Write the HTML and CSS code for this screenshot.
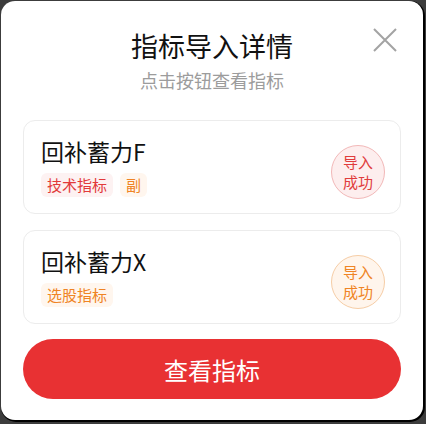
FILE: index.html
```html
<!DOCTYPE html>
<html lang="zh-CN">
<head>
    <meta charset="UTF-8">
    <meta name="viewport" content="width=device-width, initial-scale=1.0">
    <title>指标导入详情</title>
    <link rel="stylesheet" href="styles.css">
</head>
<body>

    <div class="dialog">
        <div class="dialog-head">
            <h2 class="dialog-title">指标导入详情</h2>
            <p class="dialog-sub">点击按钮查看指标</p>
            <button class="close-btn" aria-label="关闭">
                <svg width="24" height="24" viewBox="0 0 24 24">
                    <path d="M1 1 L23 23 M23 1 L1 23" stroke="#a3a3a3" stroke-width="2" fill="none"/>
                </svg>
            </button>
        </div>

        <div class="card-list">
            <div class="card">
                <div class="card-info">
                    <div class="card-name">回补蓄力F</div>
                    <div class="tags">
                        <span class="tag tag-red">技术指标</span>
                        <span class="tag tag-orange">副</span>
                    </div>
                </div>
                <div class="badge badge-red">导入<br>成功</div>
            </div>

            <div class="card">
                <div class="card-info">
                    <div class="card-name">回补蓄力X</div>
                    <div class="tags">
                        <span class="tag tag-orange">选股指标</span>
                    </div>
                </div>
                <div class="badge badge-orange">导入<br>成功</div>
            </div>
        </div>

        <button class="main-btn">查看指标</button>
    </div>

</body>
</html>
```

FILE: styles.css
```css
* {
    box-sizing: border-box;
}

body {
    margin: 0;
    width: 426px;
    height: 424px;
    background-color: #3c3c3c;
    font-family: "Noto Sans CJK SC", "Noto Sans", sans-serif;
}

.dialog {
    position: relative;
    margin: 1px 0 0 1px;
    width: 422px;
    height: 419px;
    background-color: #fff;
    border-radius: 14px;
    box-shadow: 1px 1px 0 1px #000;
    padding: 0 22px;
}

.dialog-head {
    text-align: center;
    padding-top: 28px;
}

.dialog-title {
    margin: 0;
    font-size: 27px;
    line-height: 34px;
    font-weight: 400;
    color: #111;
}

.dialog-sub {
    margin: 5px 0 0;
    font-size: 18px;
    line-height: 24px;
    color: #9c9c9c;
}

.close-btn {
    position: absolute;
    top: 27px;
    right: 26px;
    width: 24px;
    height: 24px;
    padding: 0;
    border: none;
    background: none;
}

.card-list {
    margin-top: 28px;
    display: flex;
    flex-direction: column;
    gap: 16px;
}

.card {
    height: 94px;
    border: 1px solid #ececec;
    border-radius: 12px;
    padding: 15px 15px 0 17px;
    display: flex;
    justify-content: space-between;
    align-items: flex-start;
}

.card-name {
    font-size: 23px;
    line-height: 30px;
    color: #111;
}

.tags {
    margin-top: 7px;
    display: flex;
    gap: 7px;
}

.tag {
    height: 24px;
    line-height: 24px;
    padding: 0 6px;
    border-radius: 6px;
    font-size: 15px;
}

.tag-red {
    color: #e23a3a;
    background-color: #fdf2f2;
}

.tag-orange {
    color: #ef8424;
    background-color: #fff6ee;
}

.badge {
    margin-top: 9px;
    width: 54px;
    height: 54px;
    border-radius: 50%;
    display: flex;
    align-items: center;
    justify-content: center;
    text-align: center;
    font-size: 15px;
    line-height: 20px;
}

.badge-red {
    color: #e03c3c;
    background-color: #fdeeee;
    border: 1px solid #f2b8b8;
}

.badge-orange {
    color: #ef8424;
    background-color: #fff5ec;
    border: 1px solid #f6cda6;
}

.main-btn {
    display: block;
    margin-top: 15px;
    width: 100%;
    height: 60px;
    border: none;
    border-radius: 30px;
    background-color: #e83133;
    color: #fff;
    font-family: inherit;
    font-size: 24px;
}
```
